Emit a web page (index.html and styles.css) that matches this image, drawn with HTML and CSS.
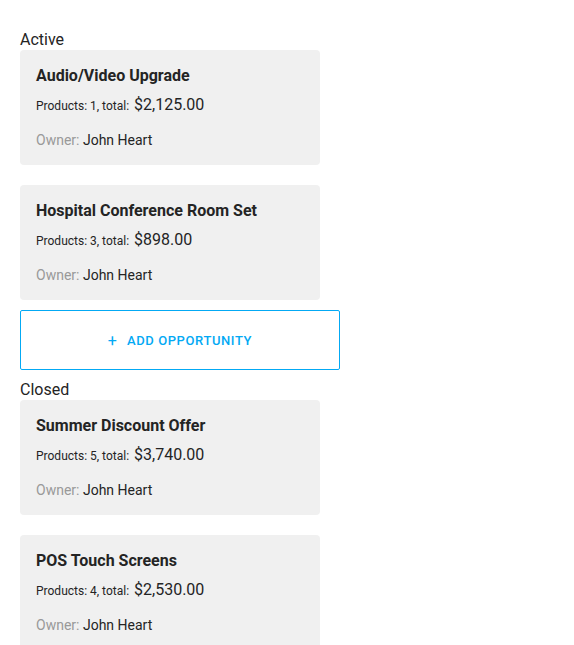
FILE: index.html
```html
<!DOCTYPE html>
<html>
<head>
<meta charset="utf-8">
<link rel="stylesheet" href="styles.css">
</head>
<body>
<div class="page">
  <div class="group-label">Active</div>
  <div class="card">
    <div class="card-title">Audio/Video Upgrade</div>
    <div class="card-products"><span class="muted-small">Products: 1, total: </span>$2,125.00</div>
    <div class="card-owner"><span class="owner-label">Owner: </span>John Heart</div>
  </div>
  <div class="card">
    <div class="card-title">Hospital Conference Room Set</div>
    <div class="card-products"><span class="muted-small">Products: 3, total: </span>$898.00</div>
    <div class="card-owner"><span class="owner-label">Owner: </span>John Heart</div>
  </div>
  <button class="add-btn"><span class="plus">+</span>ADD OPPORTUNITY</button>
  <div class="group-label">Closed</div>
  <div class="card">
    <div class="card-title">Summer Discount Offer</div>
    <div class="card-products"><span class="muted-small">Products: 5, total: </span>$3,740.00</div>
    <div class="card-owner"><span class="owner-label">Owner: </span>John Heart</div>
  </div>
  <div class="card">
    <div class="card-title">POS Touch Screens</div>
    <div class="card-products"><span class="muted-small">Products: 4, total: </span>$2,530.00</div>
    <div class="card-owner"><span class="owner-label">Owner: </span>John Heart</div>
  </div>
</div>
</body>
</html>
```
FILE: styles.css
```css
html, body {
  margin: 0;
  padding: 0;
  background: #fff;
}
body {
  font-family: Roboto, "Liberation Sans", sans-serif;
  color: #242424;
}
.page {
  padding: 20px;
  width: 320px;
  display: flex;
  flex-direction: column;
}
.group-label {
  font-size: 16px;
  line-height: 20px;
  margin-top: 10px;
  color: #242424;
}
.card {
  width: 300px;
  box-sizing: border-box;
  background: #f0f0f0;
  border-radius: 4px;
  padding: 16px 16px 15px;
  margin-bottom: 20px;
}
.card + .add-btn {
  margin-top: -10px;
}
.card-title {
  font-size: 16px;
  font-weight: 700;
  line-height: 20px;
  color: #242424;
}
.card-products {
  margin-top: 9px;
  font-size: 16px;
  line-height: 20px;
  height: 20px;
}
.muted-small {
  font-size: 12px;
  line-height: 1;
  margin-right: 2px;
}
.card-owner {
  margin-top: 15px;
  font-size: 14px;
  line-height: 20px;
}
.owner-label {
  color: #999;
}
.add-btn {
  width: 320px;
  height: 60px;
  box-sizing: border-box;
  border: 1px solid #03a9f4;
  border-radius: 2px;
  background: #fff;
  color: #03a9f4;
  font-family: Roboto, "Liberation Sans", sans-serif;
  font-size: 13px;
  font-weight: 500;
  letter-spacing: 0.6px;
  display: flex;
  align-items: center;
  justify-content: center;
  padding: 0;
  cursor: pointer;
}
.plus {
  font-size: 16px;
  font-weight: 400;
  margin-right: 10px;
  letter-spacing: 0;
}
```
